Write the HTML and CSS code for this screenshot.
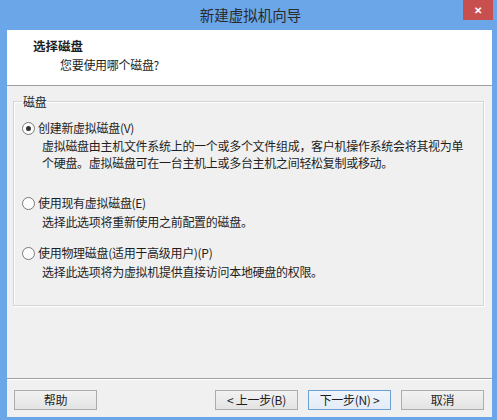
FILE: index.html
```html
<!DOCTYPE html>
<html lang="zh-CN">
<head>
  <meta charset="UTF-8" />
  <title>新建虚拟机向导</title>
  <link rel="stylesheet" href="styles.css">
</head>
<body>
  <div class="window">
    <div class="titlebar">
      <span class="title">新建虚拟机向导</span>
      <span class="close">&#x2715;</span>
    </div>

    <div class="client">
      <div class="header">
        <div class="header-title">选择磁盘</div>
        <div class="header-sub">您要使用哪个磁盘?</div>
      </div>

      <div class="content">
        <fieldset class="group">
          <legend>磁盘</legend>

          <div class="option first">
            <label class="option-label"><span class="radio checked"></span>创建新虚拟磁盘(V)</label>
            <div class="option-desc">虚拟磁盘由主机文件系统上的一个或多个文件组成，客户机操作系统会将其视为单个硬盘。虚拟磁盘可在一台主机上或多台主机之间轻松复制或移动。</div>
          </div>

          <div class="option">
            <label class="option-label"><span class="radio"></span>使用现有虚拟磁盘(E)</label>
            <div class="option-desc">选择此选项将重新使用之前配置的磁盘。</div>
          </div>

          <div class="option">
            <label class="option-label"><span class="radio"></span>使用物理磁盘(适用于高级用户)(P)</label>
            <div class="option-desc">选择此选项将为虚拟机提供直接访问本地硬盘的权限。</div>
          </div>
        </fieldset>
      </div>

      <div class="footer">
        <button class="btn">帮助</button>
        <div class="spacer"></div>
        <button class="btn">&lt; 上一步(B)</button>
        <button class="btn default">下一步(N) &gt;</button>
        <button class="btn">取消</button>
      </div>
    </div>
  </div>
</body>
</html>
```

FILE: styles.css
```css
body {
  margin: 0;
  padding: 0;
  font-family: "Noto Sans CJK SC", "Noto Sans", sans-serif;
  font-size: 12px;
  color: #1e1e1e;
}
.window {
  width: 497px;
  height: 420px;
  background: #6ba6e8;
  display: flex;
  flex-direction: column;
  box-sizing: border-box;
  padding: 0 5px 3px 7px;
}
.titlebar {
  position: relative;
  height: 30px;
  display: flex;
  align-items: center;
  justify-content: center;
}
.title {
  font-size: 14.5px;
  line-height: 30px;
  color: #2a2a2a;
  margin-left: 2px;
}
.close {
  position: absolute;
  top: 0;
  right: -1px;
  width: 30px;
  height: 20px;
  background: #c7504f;
  color: #fff;
  font-size: 10px;
  font-weight: bold;
  line-height: 20px;
  text-align: center;
}
.client {
  flex: 1;
  background: #f0f0f0;
  display: flex;
  flex-direction: column;
}
.header {
  background: #fff;
  border-bottom: 1px solid #a0a0a0;
  padding: 7px 0 0 26px;
  box-sizing: border-box;
  height: 56px;
}
.header-title {
  font-weight: bold;
  font-size: 12.5px;
  line-height: 17px;
}
.header-sub {
  padding-left: 27px;
  line-height: 17px;
  margin-top: 2px;
  letter-spacing: -0.3px;
}
.content {
  padding: 7px 8px 0 6px;
  flex: 1;
}
.group {
  margin: 0;
  border: 1px solid #d5d5d5;
  box-shadow: inset 1px 1px 0 #fff, 1px 1px 0 #fff;
  padding: 0 8px 25px 8px;
}
.group legend {
  padding: 0 1px;
  line-height: 17px;
  letter-spacing: -0.3px;
}
.option {
  margin-top: 14px;
}
.option.first {
  margin-top: 9px;
  min-height: 75px;
}
.option.first + .option {
  margin-top: 0;
}
.option-label {
  display: flex;
  align-items: center;
  line-height: 18px;
  letter-spacing: -0.3px;
}
.radio {
  width: 11px;
  height: 11px;
  border: 1px solid #7a7a7a;
  border-radius: 50%;
  background: #fdfdfd;
  margin-right: 3px;
  display: flex;
  align-items: center;
  justify-content: center;
  flex-shrink: 0;
}
.radio.checked::after {
  content: "";
  width: 5px;
  height: 5px;
  border-radius: 50%;
  background: #333;
}
.option-desc {
  padding: 0 10px 0 20px;
  line-height: 17px;
  letter-spacing: -0.3px;
  margin-top: 1px;
}
.option.first .option-desc {
  margin-top: 0;
}
.footer {
  border-top: 1px solid #a0a0a0;
  box-shadow: inset 0 1px 0 #fff;
  display: flex;
  align-items: flex-start;
  gap: 10px;
  padding: 11px 8px 0 7px;
  height: 39px;
  box-sizing: border-box;
}
.spacer {
  flex: 1;
}
.btn {
  width: 83px;
  height: 20px;
  padding: 0;
  font-family: inherit;
  font-size: 12px;
  line-height: 18px;
  color: #1e1e1e;
  border: 1px solid #adadad;
  background: linear-gradient(#f2f2f2, #e3e3e3);
  letter-spacing: -0.3px;
}
.btn.default {
  border-color: #6c9fd3;
  background: linear-gradient(#eef4fb, #e3ecf6);
}
```
